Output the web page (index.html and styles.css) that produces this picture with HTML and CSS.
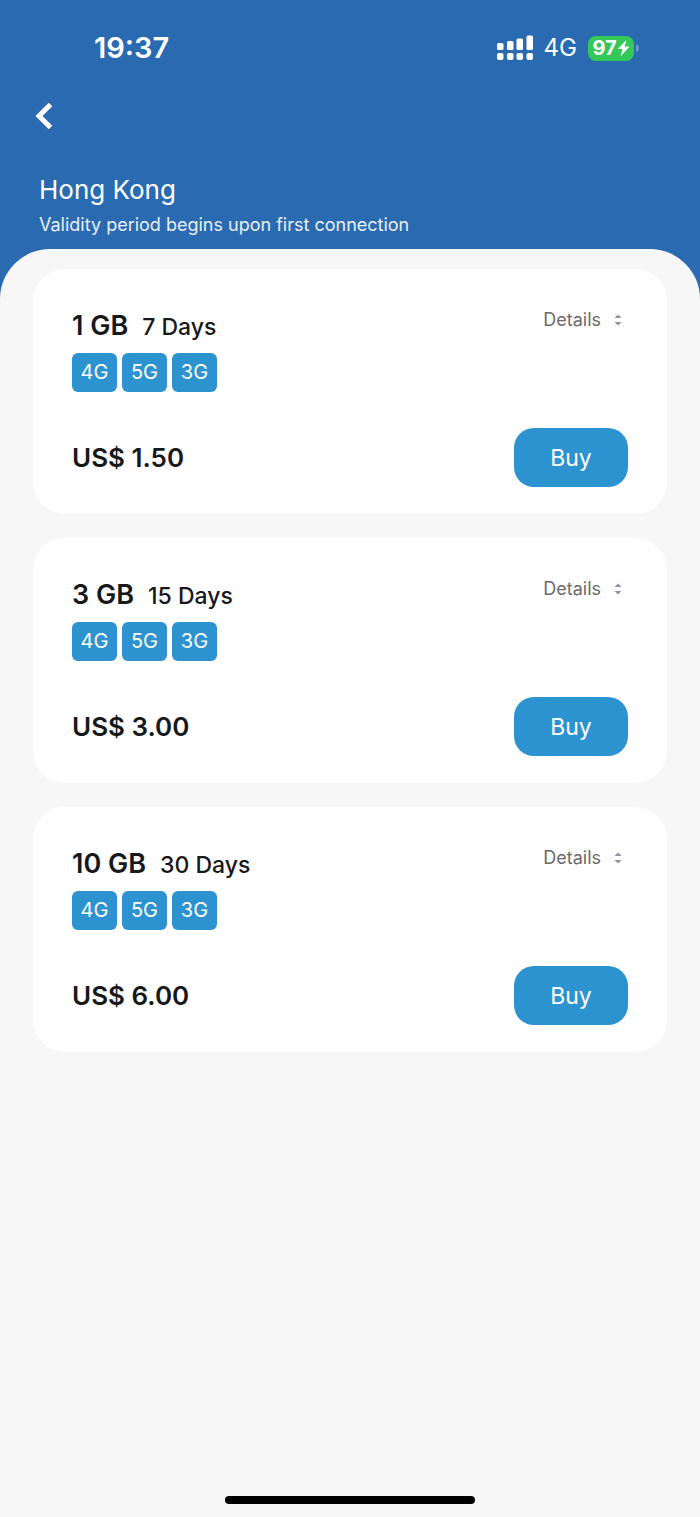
FILE: index.html
```html
<!DOCTYPE html>
<html lang="en">
<head>
<meta charset="utf-8">
<meta name="viewport" content="width=device-width, initial-scale=1">
<title>Hong Kong data plans</title>
<link rel="stylesheet" href="styles.css">
</head>
<body>
<header class="header">
  <div class="status">
    <span class="clock">19:37</span>
    <div class="indicators">
      <svg class="signal" width="36" height="26" viewBox="0 0 36 26" fill="#fff" aria-hidden="true">
        <rect x="0" y="8" width="6.500" height="7" rx="1.5"/><rect x="10" y="6" width="6.500" height="9" rx="1.5"/><rect x="19.500" y="3.500" width="6.500" height="11.500" rx="1.5"/><rect x="29.500" y="0.500" width="6.500" height="14.500" rx="1.5"/>
        <rect x="0" y="18" width="6.500" height="7" rx="2"/><rect x="10" y="18" width="6.500" height="7" rx="2"/><rect x="19.500" y="18" width="6.500" height="7" rx="2"/><rect x="29.500" y="18" width="6.500" height="7" rx="2"/>
      </svg>
      <span class="network">4G</span>
      <div class="battery">
        <span class="level">97<svg width="13" height="18" viewBox="0 0 13 18" fill="#fff" aria-hidden="true"><path d="M9.500 1 .5 10h5L3.500 17.500 12.500 7.500h-5z"/></svg></span>
        <svg width="3" height="8" viewBox="0 0 3 8" fill="#6b96c9" aria-hidden="true"><path d="M0 0q3 1 3 4t-3 4z"/></svg>
      </div>
    </div>
  </div>
  <button class="back" type="button" aria-label="Back">
    <svg width="18" height="28" viewBox="0 0 18 28" fill="none" stroke="#fff" stroke-width="5" aria-hidden="true"><path d="M15.500 2.500 4 14l11.500 11.500"/></svg>
  </button>
  <h1 class="title">Hong Kong</h1>
  <p class="subtitle">Validity period begins upon first connection</p>
</header>
<main class="panel">
  <article class="card">
    <div class="row top">
      <h2 class="plan">1 GB <span class="days">7 Days</span></h2>
      <button class="details" type="button">Details <svg width="8" height="12" viewBox="0 0 8 12" fill="#918faf" aria-hidden="true"><path d="M.5 4 4 .5 7.500 4zM.5 8 4 11.500 7.500 8z"/></svg></button>
    </div>
    <ul class="tags"><li>4G</li><li>5G</li><li>3G</li></ul>
    <div class="row"><span class="price">US$ 1.50</span><button class="buy" type="button">Buy</button></div>
  </article>
  <article class="card">
    <div class="row top">
      <h2 class="plan">3 GB <span class="days">15 Days</span></h2>
      <button class="details" type="button">Details <svg width="8" height="12" viewBox="0 0 8 12" fill="#918faf" aria-hidden="true"><path d="M.5 4 4 .5 7.500 4zM.5 8 4 11.500 7.500 8z"/></svg></button>
    </div>
    <ul class="tags"><li>4G</li><li>5G</li><li>3G</li></ul>
    <div class="row"><span class="price">US$ 3.00</span><button class="buy" type="button">Buy</button></div>
  </article>
  <article class="card">
    <div class="row top">
      <h2 class="plan">10 GB <span class="days">30 Days</span></h2>
      <button class="details" type="button">Details <svg width="8" height="12" viewBox="0 0 8 12" fill="#918faf" aria-hidden="true"><path d="M.5 4 4 .5 7.500 4zM.5 8 4 11.500 7.500 8z"/></svg></button>
    </div>
    <ul class="tags"><li>4G</li><li>5G</li><li>3G</li></ul>
    <div class="row"><span class="price">US$ 6.00</span><button class="buy" type="button">Buy</button></div>
  </article>
  <div class="home"></div>
</main>
</body>
</html>
```
FILE: styles.css
```css
* { box-sizing: border-box; }
body {
  margin: 0;
  min-height: 100vh;
  display: flex;
  flex-direction: column;
  background: #296ab1;
  color: #17181a;
  font-family: Inter, "Liberation Sans", sans-serif;
}
h1, h2, p, ul { margin: 0; padding: 0; }
button { border: 0; padding: 0; background: none; font: inherit; cursor: pointer; }
svg { display: block; flex: none; }

.header { padding: 32px 39px 12px; color: #fff; }
.status { display: flex; justify-content: space-between; align-items: center; height: 32px; padding: 0 22px 0 55px; }
.clock { font-size: 29px; font-weight: 600; line-height: 32px; }
.indicators { display: flex; align-items: center; gap: 11px; }
.network { font-size: 24px; line-height: 32px; }
.battery { display: flex; align-items: center; gap: 2px; }
.level {
  display: flex;
  align-items: center;
  justify-content: center;
  width: 46px;
  height: 25px;
  border-radius: 8px;
  background: #34c759;
  font-size: 20px;
  font-weight: 700;
}
.back { display: block; margin: 38px 0 0 -4px; }
.title { margin-top: 42px; font-size: 26px; font-weight: 400; line-height: 36px; }
.subtitle { margin-top: 5px; font-size: 18px; line-height: 24px; color: #e9f0f7; }

.panel {
  flex: 1;
  display: flex;
  flex-direction: column;
  gap: 24px;
  padding: 20px 33px 13px;
  border-radius: 50px 50px 0 0;
  background: #f7f7f7;
}
.card { padding: 39px 39px 27px; border-radius: 32px; background: #fff; }
.row { display: flex; justify-content: space-between; align-items: center; }
.top { align-items: flex-start; }
.plan { display: flex; align-items: baseline; gap: 14px; font-size: 27px; font-weight: 600; line-height: 36px; }
.days { font-size: 23px; font-weight: 500; }
.details { display: flex; align-items: center; gap: 13px; padding-right: 6px; font-size: 18px; line-height: 24px; color: #6b6b6b; }
.tags { display: flex; gap: 5px; margin: 8px 0 36px; list-style: none; }
.tags li { min-width: 45px; border-radius: 6px; background: #2c93d0; color: #fff; font-size: 20px; line-height: 39px; text-align: center; }
.price { font-size: 26px; font-weight: 600; line-height: 36px; }
.buy { width: 114px; height: 59px; border-radius: 20px; background: #2c93d0; color: #fff; font-size: 23px; }
.home { align-self: center; width: 250px; height: 8px; margin-top: auto; border-radius: 4px; background: #000; }
```
